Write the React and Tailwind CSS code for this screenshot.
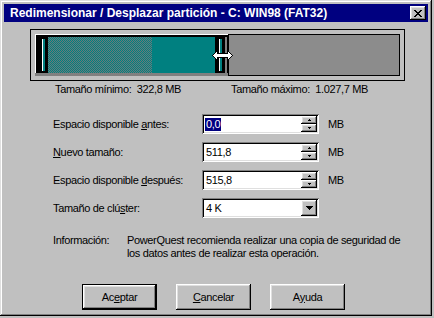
import React from "react";

const raised =
  "shadow-[inset_-1px_-1px_#000,inset_1px_1px_#fff,inset_-2px_-2px_#808080,inset_2px_2px_#dfdfdf]";
const sunken =
  "shadow-[inset_1px_1px_#808080,inset_-1px_-1px_#fff,inset_2px_2px_#000,inset_-2px_-2px_#dfdfdf]";

function SpinHalf({ up }) {
  return (
    <div
      className={`${raised} flex-1 bg-[#c0c0c0] flex items-center justify-center`}
    >
      <svg width="3" height="2" shapeRendering="crispEdges">
        {up ? (
          <>
            <rect x="1" y="0" width="1" height="1" fill="#000" />
            <rect x="0" y="1" width="3" height="1" fill="#000" />
          </>
        ) : (
          <>
            <rect x="0" y="0" width="3" height="1" fill="#000" />
            <rect x="1" y="1" width="1" height="1" fill="#000" />
          </>
        )}
      </svg>
    </div>
  );
}

function SpinInput({ value, selected }) {
  return (
    <div
      className={`${sunken} shrink-0 w-[117px] h-[20px] bg-white flex items-center p-[2px]`}
    >
      <div className="flex-1 flex items-center pl-[1px] h-full">
        {selected ? (
          <span className="bg-[#000080] text-white leading-[13px] px-[1px]">
            {value}
          </span>
        ) : (
          <span className="leading-[13px] pl-[1px]">{value}</span>
        )}
      </div>
      <div className="flex flex-col w-[16px] h-[16px]">
        <SpinHalf up />
        <SpinHalf />
      </div>
    </div>
  );
}

function Row({ label, children }) {
  return (
    <div className="flex items-center h-[20px]">
      <div className="shrink-0 w-[198px] pl-[49px] whitespace-nowrap">
        {label}
      </div>
      {children}
    </div>
  );
}

function Button({ children, def }) {
  if (def) {
    return (
      <div className="w-[75px] h-[26px] border border-black">
        <div
          className={`${raised} w-full h-full bg-[#c0c0c0] flex items-center justify-center`}
        >
          {children}
        </div>
      </div>
    );
  }
  return (
    <div
      className={`${raised} w-[75px] h-[26px] bg-[#c0c0c0] flex items-center justify-center`}
    >
      {children}
    </div>
  );
}

export default function App() {
  return (
    <div
      className="relative w-[434px] h-[318px] bg-[#c0c0c0] overflow-hidden text-[11px] leading-[13px] tracking-[-0.35px] text-black"
      style={{ fontFamily: '"Liberation Sans", Arial, sans-serif' }}
    >
      <div
        className={`w-[432px] h-[316px] bg-[#c0c0c0] p-[4px] flex flex-col shadow-[inset_-1px_-1px_#000,inset_1px_1px_#dfdfdf,inset_-2px_-2px_#808080,inset_2px_2px_#fff]`}
      >
        {/* Title bar */}
        <div className="h-[18px] bg-[#000080] flex items-center justify-between pl-[6px] pr-[2px]">
          <span className="text-white font-bold text-[12px] leading-[14px] tracking-normal whitespace-nowrap">
            Redimensionar / Desplazar partición - C: WIN98 (FAT32)
          </span>
          <div
            className={`${raised} w-[16px] h-[14px] bg-[#c0c0c0] flex items-center justify-center`}
          >
            <svg width="8" height="7" shapeRendering="crispEdges">
              <path
                d="M0 0h2v1h1v1h2V1h1V0h2v1H7v1H6v1H5v1h1v1h1v1h1v1H6V6H5V5H3v1H2v1H0V6h1V5h1V4h1V3H2V2H1V1H0z"
                fill="#000"
              />
            </svg>
          </div>
        </div>

        {/* Partition bar */}
        <div className="mt-[7px] ml-[26px] w-[375px] h-[52px] border border-black pt-[4px] pl-[4px]">
          <div className="flex w-[365px] h-[42px]">
            <div className="flex flex-col w-[193px] h-[42px]">
              <div className="flex-1 flex border-t border-l border-white bg-black pt-[2px]">
                <div className="w-[12px] flex pl-[6px] py-[2px]">
                  <div className="w-[3px] border-l border-white bg-[#008080]" />
                </div>
                <div className="w-[104px] bg-[repeating-conic-gradient(#008080_0_25%,#6a7a7a_0_50%)] bg-[length:2px_2px]" />
                <div className="w-[63px] bg-[#008080]" />
                <div className="w-[10px] flex pl-[4px] py-[2px]">
                  <div className="w-[3px] border-l border-white bg-[#008080]" />
                </div>
                <div className="w-[2px] bg-[#808080]" />
              </div>
              <div className="h-[3px] bg-[#808080]" />
            </div>
            <div className="flex-1 border border-black bg-[#8c8c8c]" />
          </div>
        </div>

        {/* Min / max labels */}
        <div className="mt-[2px] flex whitespace-nowrap">
          <div className="pl-[51px] w-[227px] shrink-0">
            Tamaño mínimo:&nbsp;&nbsp;322,8 MB
          </div>
          <div>Tamaño máximo:&nbsp;&nbsp;1.027,7 MB</div>
        </div>

        {/* Form */}
        <div className="mt-[18px] flex flex-col gap-[8px]">
          <Row
            label={
              <>
                Espacio disponible <u>a</u>ntes:
              </>
            }
          >
            <SpinInput value="0,0" selected />
            <span className="ml-[9px]">MB</span>
          </Row>
          <Row
            label={
              <>
                <u>N</u>uevo tamaño:
              </>
            }
          >
            <SpinInput value="511,8" />
            <span className="ml-[9px]">MB</span>
          </Row>
          <Row
            label={
              <>
                Espacio disponible <u>d</u>espués:
              </>
            }
          >
            <SpinInput value="515,8" />
            <span className="ml-[9px]">MB</span>
          </Row>
          <Row
            label={
              <>
                Tamaño de clú<u>s</u>ter:
              </>
            }
          >
            <div
              className={`${sunken} shrink-0 w-[117px] h-[20px] bg-white flex items-center p-[2px]`}
            >
              <div className="flex-1 pl-[2px]">4 K</div>
              <div
                className={`${raised} w-[16px] h-[16px] bg-[#c0c0c0] flex items-center justify-center`}
              >
                <svg width="7" height="4" shapeRendering="crispEdges">
                  <path d="M0 0h7v1H6v1H5v1H4v1H3V3H2V2H1V1H0z" fill="#000" />
                </svg>
              </div>
            </div>
          </Row>
        </div>

        {/* Info */}
        <div className="mt-[16px] flex whitespace-nowrap">
          <div className="pl-[49px] w-[123px] shrink-0">Información:</div>
          <div>
            PowerQuest recomienda realizar una copia de seguridad de
            <br />
            los datos antes de realizar esta operación.
          </div>
        </div>

        {/* Buttons */}
        <div className="mt-[24px] ml-[78px] flex gap-[19px]">
          <Button def>
            Ac<u>e</u>ptar
          </Button>
          <Button>
            <u>C</u>ancelar
          </Button>
          <Button>
            A<u>y</u>uda
          </Button>
        </div>
      </div>

      {/* Resize cursor */}
      <svg
        className="absolute left-[212px] top-[50px]"
        width="22"
        height="12"
        viewBox="0 0 22 12"
      >
        <path
          d="M0.5 5.5 L5.5 0.5 L5.5 3.5 L15.5 3.5 L15.5 0.5 L20.5 5.5 L15.5 10.5 L15.5 7.5 L5.5 7.5 L5.5 10.5 Z"
          fill="#fff"
          stroke="#000"
          strokeWidth="1"
          shapeRendering="crispEdges"
        />
      </svg>
    </div>
  );
}
